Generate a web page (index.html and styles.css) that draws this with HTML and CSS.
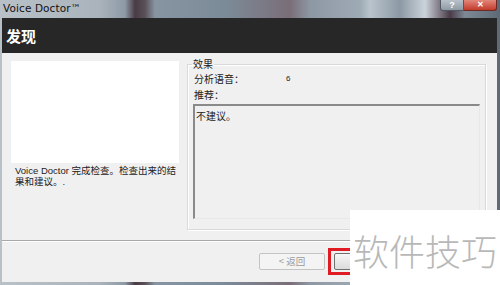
FILE: index.html
```html
<!DOCTYPE html>
<html>
<head>
<meta charset="utf-8">
<link rel="stylesheet" href="styles.css">
</head>
<body>
<div class="window">
  <div class="titlebar">
    <span class="title">Voice Doctor™</span>
    <div class="controls">
      <span class="btn-help">?</span>
      <span class="btn-close">✕</span>
    </div>
  </div>
  <div class="frame">
    <div class="header">发现</div>
    <div class="content">
      <div class="left">
        <div class="picture"></div>
        <p class="desc">Voice Doctor 完成检查。检查出来的结果和建议。.</p>
      </div>
      <fieldset class="group">
        <legend>效果</legend>
        <div class="row"><span class="label">分析语音：</span><span class="value">6</span></div>
        <div class="row">推荐：</div>
        <div class="textbox">不建议。</div>
      </fieldset>
    </div>
    <div class="footer">
      <button class="btn disabled">&lt; 返回</button>
      <div class="highlight"><button class="btn"></button></div>
    </div>
  </div>
</div>
<div class="watermark">软件技巧</div>
</body>
</html>
```
FILE: styles.css
```css
html, body {
  margin: 0;
  padding: 0;
}
body {
  width: 500px;
  height: 285px;
  overflow: hidden;
  position: relative;
  font-family: "Liberation Sans", "Noto Sans CJK SC", sans-serif;
  background: #5d6873;
}
.window {
  width: 500px;
  height: 285px;
  display: flex;
  flex-direction: column;
  background: linear-gradient(90deg, #b9c1c8 0%, #aab3bb 20%, #8d9aa6 25%, #4a3b44 27%, #5a5058 29%, #8795a2 31%, #7c8b98 45%, #7a6e78 58%, #8d98a4 62%, #9eaab4 72%, #b9c4cc 74%, #8c99a5 80%, #cbd3da 85%, #4a3a48 90%, #7d8a96 93%, #5d6a76 100%);
}
.titlebar {
  height: 18px;
  display: flex;
  align-items: flex-start;
  justify-content: space-between;
  padding: 0 3px 0 3px;
}
.title {
  font-family: "DejaVu Sans", "Liberation Sans", sans-serif;
  font-size: 10.5px;
  color: #111;
  line-height: 15px;
  padding-top: 1px;
  letter-spacing: 0.1px;
}
.controls {
  display: flex;
  height: 11px;
}
.btn-help {
  width: 22px;
  height: 10px;
  border: 1px solid #505a64;
  border-top: none;
  border-radius: 0 0 0 3px;
  background: linear-gradient(#b9c2ca, #8f9aa4);
  color: #fff;
  font-size: 9px;
  font-weight: bold;
  line-height: 10px;
  text-align: center;
}
.btn-close {
  width: 32px;
  height: 10px;
  border: 1px solid #6b2a24;
  border-top: none;
  border-left: none;
  border-radius: 0 0 3px 0;
  background: linear-gradient(#e2877b, #c23a2b);
  color: #fff;
  font-size: 8px;
  font-weight: bold;
  line-height: 10px;
  text-align: center;
}
.frame {
  flex: 1;
  display: flex;
  flex-direction: column;
  margin: 0 3px 3px 2px;
  background: #f0f0f0;
}
.header {
  height: 35px;
  background: #272727;
  color: #fff;
  font-family: "Noto Sans CJK SC", sans-serif;
  font-weight: bold;
  font-size: 15px;
  line-height: 35px;
  padding-left: 4px;
  box-sizing: border-box;
}
.content {
  height: 187px;
  display: flex;
  padding: 5px 0 0 9px;
  box-sizing: border-box;
}
.left {
  width: 168px;
  padding-top: 3px;
}
.picture {
  width: 168px;
  height: 102px;
  background: #fff;
}
.desc {
  margin: 2px 0 0 4px;
  font-size: 9.5px;
  line-height: 11px;
  color: #222;
  font-family: "Liberation Sans", "Noto Sans CJK SC", sans-serif;
  width: 164px;
}
.group {
  margin: 0 0 0 8px;
  width: 299px;
  height: 172px;
  box-sizing: border-box;
  border: 1px solid #d9d9d9;
  box-shadow: inset 1px 1px 0 #fff, 1px 1px 0 #fff;
  padding: 1px 4px 0 5px;
  font-family: "Noto Sans CJK SC", sans-serif;
  font-size: 10px;
  color: #222;
}
.group legend {
  padding: 0 1px;
  margin-left: -1px;
  font-size: 10px;
  line-height: 12px;
}
.row {
  display: flex;
  height: 16px;
  line-height: 16px;
  margin-left: 1px;
}
.label {
  width: 92px;
}
.value {
  font-family: "Liberation Sans", sans-serif;
  font-size: 8px;
}
.textbox {
  margin-top: 1px;
  height: 115px;
  width: 287px;
  box-sizing: border-box;
  border-top: 2px solid #8a8a8a;
  border-left: 2px solid #8a8a8a;
  border-right: 1px solid #e8e8e8;
  border-bottom: 1px solid #e8e8e8;
  padding: 2px 0 0 1px;
  font-size: 10px;
  line-height: 16px;
  background: #f0f0f0;
}
.footer {
  flex: 1;
  border-top: 1px solid #a8a8a8;
  box-shadow: inset 0 1px 0 #fff;
  display: flex;
  align-items: flex-start;
  padding: 7px 0 0 257px;
  box-sizing: border-box;
}
.btn {
  width: 66px;
  height: 17px;
  margin-top: 5px;
  border: 1px solid #c4c4c4;
  border-radius: 2px;
  background: #f4f4f4;
  font-family: "Noto Sans CJK SC", sans-serif;
  font-size: 9.5px;
  color: #9a9a9a;
  padding: 0;
  line-height: 15px;
}
.highlight {
  margin-left: 3px;
  border: 3px solid #e01b24;
  padding: 2px 3px;
  width: 70px;
  display: flex;
}
.highlight .btn {
  margin-top: 0;
  background: linear-gradient(#f6f6f6, #dcdcdc);
  border-color: #707070;
  color: #222;
}
.watermark {
  position: absolute;
  left: 350px;
  top: 210px;
  width: 150px;
  height: 75px;
  background: #fff;
  color: #b8b8b8;
  font-family: "Noto Sans CJK SC", sans-serif;
  font-weight: 300;
  font-size: 36px;
  line-height: 80px;
  text-align: center;
  box-sizing: border-box;
  padding-left: 0;
}
```
